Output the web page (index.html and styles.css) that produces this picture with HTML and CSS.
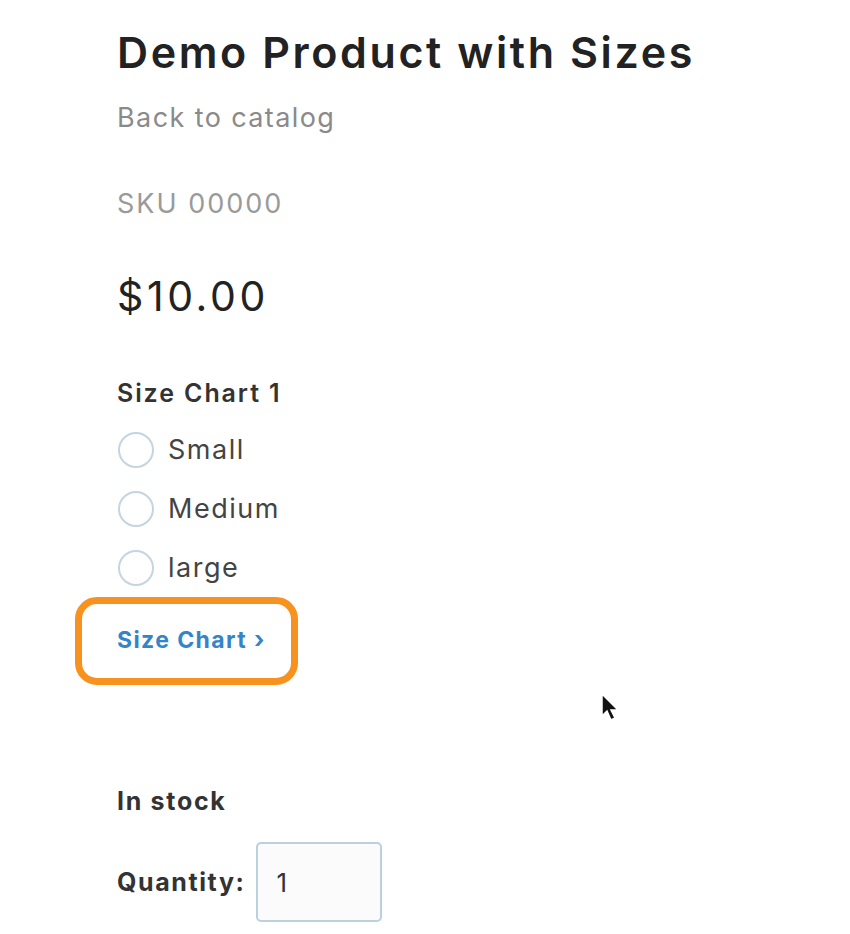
FILE: index.html
```html
<!DOCTYPE html>
<html>
<head>
<meta charset="utf-8">
<link rel="stylesheet" href="styles.css">
</head>
<body>
<main class="product">
  <h1 class="title">Demo Product with Sizes</h1>
  <a class="back" href="#">Back to catalog</a>
  <div class="sku">SKU 00000</div>
  <div class="price">$10.00</div>
  <div class="option-title">Size Chart 1</div>
  <ul class="options">
    <li><span class="radio"></span><span class="label">Small</span></li>
    <li><span class="radio"></span><span class="label">Medium</span></li>
    <li><span class="radio"></span><span class="label">large</span></li>
  </ul>
  <div class="highlight"><a class="chart-link" href="#">Size Chart <span class="chev">›</span></a></div>
  <div class="stock">In stock</div>
  <div class="qty-row"><span class="qty-label">Quantity:</span><span class="qty-input">1</span></div>
</main>
<svg class="cursor" width="22" height="32" viewBox="0 0 22 32"><path d="M2 2 L2 24 L7 19 L11 28 L15 26 L11 18 L18 18 Z" fill="#111" stroke="#fff" stroke-width="1.5"/></svg>
</body>
</html>
```
FILE: styles.css
```css
html, body { margin: 0; background: #fff; }
body { font-family: Inter, "Open Sans", Arial, sans-serif; position: relative; width: 850px; height: 934px; overflow: hidden; }
.product { padding: 22px 0 0 117px; }
.title { margin: 0; font-size: 43px; font-weight: 600; color: #222; line-height: 60px; letter-spacing: 2.6px; }
.back { display: block; margin-top: 18px; font-size: 27px; color: #8a8a8a; text-decoration: none; line-height: 36px; letter-spacing: 1.4px; }
.sku { margin-top: 50px; font-size: 27px; color: #9a9a9a; line-height: 36px; letter-spacing: 2px; }
.price { margin-top: 48px; font-size: 41px; color: #222; line-height: 52px; letter-spacing: 3.6px; }
.option-title { margin-top: 54px; font-size: 25px; font-weight: 600; color: #333; line-height: 34px; letter-spacing: 1.9px; }
.options { list-style: none; margin: 10px 0 0; padding: 0; }
.options li { display: flex; align-items: center; height: 59px; }
.radio { width: 36px; height: 36px; border: 2px solid #c6d4e0; border-radius: 50%; box-sizing: border-box; margin-left: 1px; }
.label { margin-left: 14px; font-size: 27px; color: #444; letter-spacing: 1.5px; }
.highlight { display: inline-block; margin: 0 0 0 -42px; padding: 20px 25px 22px 35px; border: 7px solid #f7921e; border-radius: 22px; }
.chart-link { font-size: 23px; font-weight: 700; color: #3484c8; text-decoration: none; line-height: 32px; letter-spacing: 1.4px; }
.chev { font-size: 24px; }
.stock { margin-top: 98px; font-size: 25px; font-weight: 700; color: #333; line-height: 36px; letter-spacing: 1.7px; }
.qty-row { display: flex; align-items: center; margin-top: 23px; gap: 10px; }
.qty-label { font-size: 25px; font-weight: 700; color: #333; letter-spacing: 1.6px; }
.qty-input { width: 126px; height: 80px; box-sizing: border-box; border: 2px solid #bcd0e2; border-radius: 5px; background: #fbfbfb; font-size: 26px; color: #333; padding-left: 19px; display: flex; align-items: center; }
.cursor { position: absolute; left: 600px; top: 692px; }
```
